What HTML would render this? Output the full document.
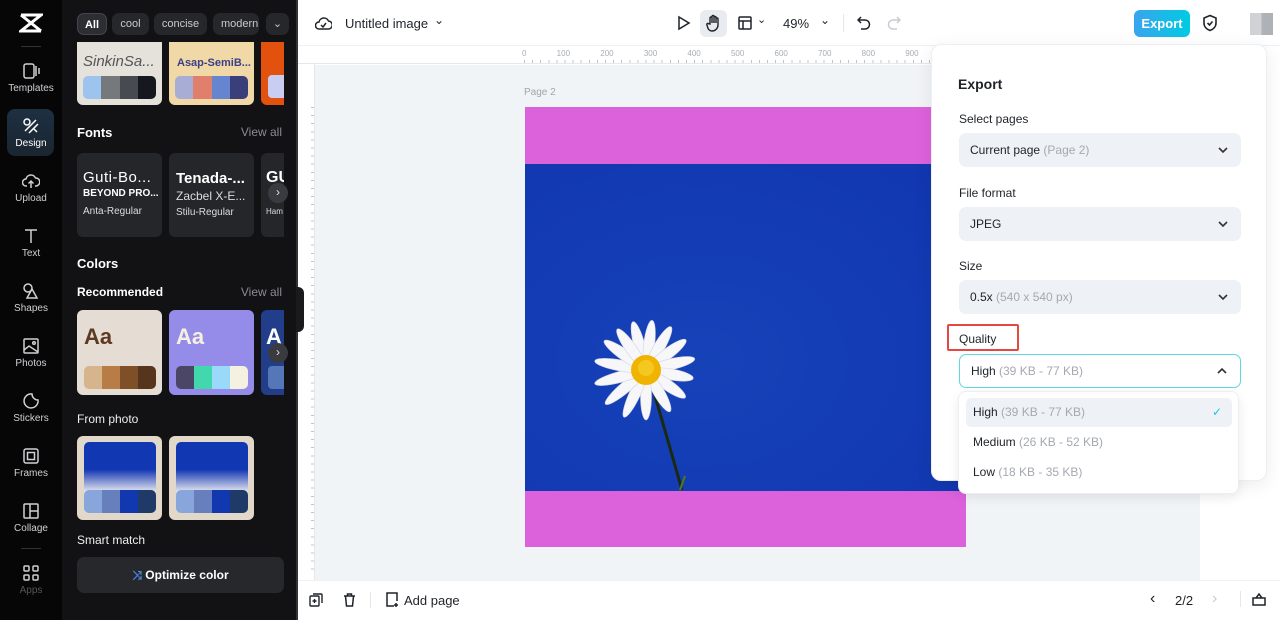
<!DOCTYPE html>
<html><head><meta charset="utf-8"><style>
*{box-sizing:border-box;margin:0;padding:0}
body{width:1280px;height:620px;overflow:hidden;position:relative;font-family:"Liberation Sans",sans-serif;background:#fff}
.a{position:absolute}
.rail{left:0;top:0;width:62px;height:620px;background:#060607}
.ri{position:absolute;left:0;width:62px;text-align:center;color:#cfd0d4;font-size:10px}
.ri svg{display:block;margin:0 auto 3px}
.panel{left:62px;top:0;width:236px;height:620px;background:#121214;border-right:2px solid #333}
.chip{position:absolute;top:13px;height:22px;border-radius:7px;background:#26272b;color:#c9cace;font-size:11px;line-height:22px;text-align:center}
.h{position:absolute;color:#fff;font-weight:bold;font-size:13px}
.va{position:absolute;color:#8a8b90;font-size:12px;right:14px}
.card{position:absolute;border-radius:6px;overflow:hidden}
.sw{position:absolute;display:flex;border-radius:5px;overflow:hidden;height:23px}
.sw i{flex:1}
.lbl{color:#1f2329;font-size:12px;position:absolute;left:27px}
.sel{position:absolute;left:27px;width:282px;height:34px;border-radius:7px;background:#eef1f5;font-size:12px;color:#1f2329;line-height:34px;padding-left:11px}
.sel span{color:#a5a9b0}
.chev{position:absolute;right:12px;top:12px}
.opt{position:absolute;left:7px;width:266px;height:29px;border-radius:5px;font-size:12px;color:#1f2329;line-height:29px;padding-left:7px}
.opt span{color:#a5a9b0}
</style></head><body>

<div class="a rail">
 <svg class="a" style="left:19px;top:13px" width="24" height="20" viewBox="0 0 24 20"><path d="M2 2h20l-20 16h20M2 2l20 16" stroke="#fff" stroke-width="3" fill="none"/></svg>
 <div class="a" style="left:21px;top:46px;width:20px;height:1px;background:#333"></div>
 <div class="ri" style="top:62px"><svg width="18" height="18" viewBox="0 0 18 18" fill="none" stroke="#cfd0d4" stroke-width="1.5"><rect x="2" y="2" width="10" height="14" rx="2"/><path d="M14 4v10M17 6v6"/></svg>Templates</div>
 <div class="a" style="left:7px;top:109px;width:47px;height:47px;border-radius:8px;background:linear-gradient(#1d3042,#1a2530)"></div>
 <div class="ri" style="top:117px;color:#fff"><svg width="18" height="18" viewBox="0 0 18 18" fill="none" stroke="#fff" stroke-width="1.5"><circle cx="5" cy="5" r="3"/><path d="M3 14L14 3M7 16l9-9M12 12l3 3"/></svg>Design</div>
 <div class="ri" style="top:172px"><svg width="18" height="18" viewBox="0 0 18 18" fill="none" stroke="#cfd0d4" stroke-width="1.5"><path d="M5 14H4a3.5 3.5 0 010-7 5 5 0 019.5-1A3.5 3.5 0 0114 14h-1M9 16V9M6.5 11.5L9 9l2.5 2.5"/></svg>Upload</div>
 <div class="ri" style="top:227px"><svg width="18" height="18" viewBox="0 0 18 18" fill="none" stroke="#cfd0d4" stroke-width="1.5"><path d="M3 3h12M9 3v13"/></svg>Text</div>
 <div class="ri" style="top:282px"><svg width="18" height="18" viewBox="0 0 18 18" fill="none" stroke="#cfd0d4" stroke-width="1.5"><circle cx="6" cy="6" r="4"/><path d="M10 7l5 9H5z"/></svg>Shapes</div>
 <div class="ri" style="top:337px"><svg width="18" height="18" viewBox="0 0 18 18" fill="none" stroke="#cfd0d4" stroke-width="1.5"><rect x="2" y="2" width="14" height="14" rx="1"/><path d="M2 13l5-4 9 6"/><circle cx="12" cy="6" r="1.3"/></svg>Photos</div>
 <div class="ri" style="top:392px"><svg width="18" height="18" viewBox="0 0 18 18" fill="none" stroke="#cfd0d4" stroke-width="1.5"><path d="M10 2a7 7 0 106 6 6 6 0 01-6-6z"/></svg>Stickers</div>
 <div class="ri" style="top:447px"><svg width="18" height="18" viewBox="0 0 18 18" fill="none" stroke="#cfd0d4" stroke-width="1.5"><rect x="2" y="2" width="14" height="14" rx="2"/><rect x="5.5" y="5.5" width="7" height="7"/></svg>Frames</div>
 <div class="ri" style="top:502px"><svg width="18" height="18" viewBox="0 0 18 18" fill="none" stroke="#cfd0d4" stroke-width="1.5"><rect x="2" y="2" width="14" height="14" rx="1"/><path d="M8 2v14M8 9h8"/></svg>Collage</div>
 <div class="a" style="left:21px;top:548px;width:20px;height:1px;background:#333"></div>
 <div class="ri" style="top:564px;color:#55565a"><svg width="18" height="18" viewBox="0 0 18 18" fill="none" stroke="#cfd0d4" stroke-width="1.5"><rect x="2" y="2" width="5" height="5" rx="1"/><rect x="11" y="2" width="5" height="5" rx="1"/><rect x="2" y="11" width="5" height="5" rx="1"/><rect x="11" y="11" width="5" height="5" rx="1"/></svg>Apps</div>
</div>

<div class="a panel">
 <div class="chip" style="left:15px;width:30px;background:#2d2e33;border:1px solid #45464b;color:#fff;font-weight:bold">All</div>
 <div class="chip" style="left:50px;width:37px">cool</div>
 <div class="chip" style="left:92px;width:53px">concise</div>
 <div class="chip" style="left:151px;width:46px;overflow:hidden;text-align:left;padding-left:8px">modern</div>
 <div class="chip" style="left:204px;width:23px">⌄</div>
 <div class="card" style="left:15px;top:42px;width:85px;height:63px;background:#e5e1db;border-radius:0 0 6px 6px">
  <div style="position:absolute;left:6px;top:11px;font-style:italic;font-size:15px;color:#555">SinkinSa...</div>
  <div class="sw" style="left:6px;top:34px;width:73px"><i style="background:#9cc4ef"></i><i style="background:#76797c"></i><i style="background:#474a50"></i><i style="background:#15181c"></i></div></div>
 <div class="card" style="left:107px;top:42px;width:85px;height:63px;background:#f0d9a6;border-radius:0 0 6px 6px">
  <div style="position:absolute;left:8px;top:15px;font-weight:bold;font-size:11px;color:#3a3f86">Asap-SemiB...</div>
  <div class="sw" style="left:6px;top:34px;width:73px"><i style="background:#a8add6"></i><i style="background:#df7f6c"></i><i style="background:#6585d0"></i><i style="background:#3a3f7b"></i></div></div>
 <div class="card" style="left:199px;top:42px;width:23px;height:63px;background:#e2520e;border-radius:0 0 0 6px">
  <div style="position:absolute;left:7px;top:33px;width:20px;height:23px;background:#c9cdf2;border-radius:4px"></div></div>
 <div class="h" style="left:15px;top:125px">Fonts</div><div class="va" style="top:125px">View all</div>
 <div class="card" style="left:15px;top:153px;width:85px;height:84px;background:#25262a">
  <div style="position:absolute;left:6px;top:16px;color:#fff;font-size:15px;white-space:nowrap;letter-spacing:.5px">Guti-Bo...</div>
  <div style="position:absolute;left:6px;top:35px;color:#fff;font-size:10px;font-weight:bold;white-space:nowrap">BEYOND PRO...</div>
  <div style="position:absolute;left:6px;top:53px;color:#ddd;font-size:10px">Anta-Regular</div></div>
 <div class="card" style="left:107px;top:153px;width:85px;height:84px;background:#25262a">
  <div style="position:absolute;left:7px;top:17px;color:#fff;font-weight:bold;font-size:15px">Tenada-...</div>
  <div style="position:absolute;left:7px;top:36px;color:#ddd;font-size:12px">Zacbel X-E...</div>
  <div style="position:absolute;left:7px;top:54px;color:#ddd;font-size:10px">Stilu-Regular</div></div>
 <div class="card" style="left:199px;top:153px;width:23px;height:84px;background:#25262a;border-radius:6px 0 0 6px">
  <div style="position:absolute;left:5px;top:16px;color:#fff;font-weight:bold;font-size:16px">GU</div>
  <div style="position:absolute;left:5px;top:54px;color:#ddd;font-size:8px">Ham</div></div>
 <div class="a" style="left:206px;top:183px;width:20px;height:20px;border-radius:50%;background:#3a3b40;color:#ddd;font-size:12px;text-align:center;line-height:19px">›</div>
 <div class="h" style="left:15px;top:256px">Colors</div>
 <div class="h" style="left:15px;top:285px;font-size:12px">Recommended</div><div class="va" style="top:285px">View all</div>
 <div class="card" style="left:15px;top:310px;width:85px;height:85px;background:#e5ddd3">
  <div style="position:absolute;left:7px;top:14px;font-weight:bold;font-size:22px;color:#5a3a22">Aa</div>
  <div class="sw" style="left:7px;top:56px;width:72px"><i style="background:#d6b48c"></i><i style="background:#b87c46"></i><i style="background:#7f4f27"></i><i style="background:#55361d"></i></div></div>
 <div class="card" style="left:107px;top:310px;width:85px;height:85px;background:#958cea">
  <div style="position:absolute;left:7px;top:14px;font-weight:bold;font-size:22px;color:#f6f0df">Aa</div>
  <div class="sw" style="left:7px;top:56px;width:72px"><i style="background:#4b4566"></i><i style="background:#43d7ae"></i><i style="background:#9bd9fb"></i><i style="background:#f5f1e0"></i></div></div>
 <div class="card" style="left:199px;top:310px;width:23px;height:85px;background:#223d8a;border-radius:6px 0 0 6px">
  <div style="position:absolute;left:5px;top:14px;font-weight:bold;font-size:22px;color:#fff">A</div>
  <div style="position:absolute;left:7px;top:56px;width:20px;height:23px;background:#5577b8;border-radius:4px"></div></div>
 <div class="a" style="left:206px;top:343px;width:20px;height:20px;border-radius:50%;background:#3a3b40;color:#ddd;font-size:12px;text-align:center;line-height:19px">›</div>
 <div class="h" style="left:15px;top:412px;font-size:12px;font-weight:normal;color:#eee">From photo</div>
 <div class="card" style="left:15px;top:436px;width:85px;height:84px;background:#e2d8ca">
  <div style="position:absolute;left:7px;top:6px;width:72px;height:50px;border-radius:5px 5px 0 0;background:linear-gradient(#1237b3 55%,#e8e8f0)"></div>
  <div class="sw" style="left:7px;top:54px;width:72px"><i style="background:#89a6dc"></i><i style="background:#6780bd"></i><i style="background:#1238b0"></i><i style="background:#1f3a66"></i></div></div>
 <div class="card" style="left:107px;top:436px;width:85px;height:84px;background:#e2d8ca">
  <div style="position:absolute;left:7px;top:6px;width:72px;height:50px;border-radius:5px 5px 0 0;background:linear-gradient(#1237b3 55%,#e8e8f0)"></div>
  <div class="sw" style="left:7px;top:54px;width:72px"><i style="background:#89a6dc"></i><i style="background:#6780bd"></i><i style="background:#1238b0"></i><i style="background:#1f3a66"></i></div></div>
 <div class="h" style="left:15px;top:533px;font-size:12px;font-weight:normal;color:#eee">Smart match</div>
 <div class="a" style="left:15px;top:557px;width:207px;height:36px;border-radius:7px;background:#27282c;color:#fff;font-weight:bold;font-size:12px;text-align:center;line-height:36px"><span style="color:#4a8cf0">⤨</span> Optimize color</div>
</div>

<div class="a" style="left:298px;top:0;width:982px;height:46px;background:#fff;border-bottom:1px solid #eef0f2"></div>
<svg class="a" style="left:315px;top:15px" width="17" height="16" viewBox="0 0 17 16" fill="none" stroke="#1f2329" stroke-width="1.5"><path d="M4 14a3.5 3.5 0 010-7 5 5 0 019.5-1A3.5 3.5 0 0113 14z"/><path d="M6 10l2 2 3-4"/></svg>
<div class="a" style="left:345px;top:16px;font-size:13px;color:#1f2329">Untitled image</div>
<div class="a" style="left:434px;top:13px;font-size:12px;color:#1f2329">⌄</div>
<svg class="a" style="left:677px;top:15px" width="14" height="16" viewBox="0 0 14 16" fill="none" stroke="#1f2329" stroke-width="1.5"><path d="M2 2l10 6-10 6z"/></svg>
<div class="a" style="left:700px;top:10px;width:27px;height:27px;border-radius:6px;background:#e8ecf0"></div>
<svg class="a" style="left:705px;top:14px" width="17" height="18" viewBox="0 0 17 18" fill="none" stroke="#1f2329" stroke-width="1.4"><path d="M5 10V4a1 1 0 012 0v5V2.5a1 1 0 012 0V9V3.5a1 1 0 012 0V9V5a1 1 0 012 0v6a6 6 0 01-6 6c-2 0-3-1-4-2.5L2 11a1 1 0 011.5-1.3z"/></svg>
<svg class="a" style="left:738px;top:16px" width="14" height="14" viewBox="0 0 14 14" fill="none" stroke="#1f2329" stroke-width="1.5"><rect x="1" y="1" width="12" height="12" rx="1"/><path d="M1 5h12M5 5v8"/></svg>
<div class="a" style="left:757px;top:13px;font-size:11px;color:#1f2329">⌄</div>
<div class="a" style="left:783px;top:16px;font-size:13px;color:#1f2329">49%</div>
<div class="a" style="left:820px;top:13px;font-size:12px;color:#1f2329">⌄</div>
<div class="a" style="left:843px;top:14px;width:1px;height:18px;background:#e5e7ea"></div>
<svg class="a" style="left:857px;top:16px" width="14" height="14" viewBox="0 0 14 14" fill="none" stroke="#1f2329" stroke-width="1.5"><path d="M4 1L1 4l3 3M1 4h7a4.5 4.5 0 010 9H4"/></svg>
<svg class="a" style="left:887px;top:16px" width="14" height="14" viewBox="0 0 14 14" fill="none" stroke="#c8ccd2" stroke-width="1.5"><path d="M10 1l3 3-3 3M13 4H6a4.5 4.5 0 000 9h4"/></svg>
<div class="a" style="left:1134px;top:10px;width:56px;height:27px;border-radius:6px;background:linear-gradient(90deg,#3aa4ee,#00cbe3);color:#fff;font-weight:bold;font-size:13px;text-align:center;line-height:27px">Export</div>
<svg class="a" style="left:1202px;top:14px" width="16" height="18" viewBox="0 0 16 18" fill="none" stroke="#1f2329" stroke-width="1.6"><path d="M8 1.5l6 2.5v5c0 4-3 6.5-6 7.5-3-1-6-3.5-6-7.5V4z"/><path d="M5.5 9l2 2 3-3.5"/></svg>
<div class="a" style="left:1250px;top:13px;width:23px;height:22px;background:linear-gradient(90deg,#d0d3d6 50%,#aeb2b7 50%)"></div>

<div class="a" style="left:298px;top:46px;width:902px;height:18px;background:#fff;border-bottom:1px solid #e4e7eb"></div>
<div class="a" style="left:298px;top:64px;width:17px;height:516px;background:#fff;border-right:1px solid #e4e7eb"></div>
<div class="a" style="left:315px;top:65px;width:885px;height:515px;background:#f1f4f7"></div>
<div class="a" style="left:1200px;top:46px;width:80px;height:534px;background:#fff"></div>
<div class="a" style="left:522px;top:49px;font-size:8px;color:#a8adb4;word-spacing:28px;white-space:nowrap">0 100 200 300 400 500 600 700 800 900 1000</div>
<div class="a" style="left:524px;top:60px;width:676px;height:3px;background:repeating-linear-gradient(90deg,#c0c4ca 0 1px,transparent 1px 8.1px)"></div>
<div class="a" style="left:311px;top:107px;width:3px;height:470px;background:repeating-linear-gradient(#c0c4ca 0 1px,transparent 1px 8.1px)"></div>
<div class="a" style="left:524px;top:87px;font-size:10px;color:#a0a5ab">Page 2</div>
<div class="a" style="left:525px;top:107px;width:441px;height:57px;background:#dc62dc"></div>
<div class="a" style="left:525px;top:164px;width:441px;height:327px;background:radial-gradient(ellipse at 40% 60%,#1642b8,#1136b0)"></div>
<div class="a" style="left:525px;top:491px;width:441px;height:56px;background:#dc62dc"></div>
<svg class="a" style="left:570px;top:310px" width="140" height="185" viewBox="0 0 140 185">
 <path d="M78 62 Q95 120 112 180" stroke="#1a2a10" stroke-width="3" fill="none"/>
 <path d="M110 180 l5 -14" stroke="#4a7a20" stroke-width="2"/>
 <g transform="rotate(-15 76 60)" fill="#f7f7fa" stroke="#d0d4e4" stroke-width=".6">
  <ellipse cx="76" cy="34" rx="5.5" ry="24" transform="rotate(0 76 60)"/>
  <ellipse cx="76" cy="34" rx="5.5" ry="24" transform="rotate(22 76 60)"/>
  <ellipse cx="76" cy="34" rx="5.5" ry="24" transform="rotate(45 76 60)"/>
  <ellipse cx="76" cy="34" rx="5.5" ry="24" transform="rotate(68 76 60)"/>
  <ellipse cx="76" cy="34" rx="5.5" ry="24" transform="rotate(92 76 60)"/>
  <ellipse cx="76" cy="34" rx="5.5" ry="22" transform="rotate(115 76 60)"/>
  <ellipse cx="76" cy="34" rx="5.5" ry="22" transform="rotate(140 76 60)"/>
  <ellipse cx="76" cy="34" rx="5.5" ry="22" transform="rotate(165 76 60)"/>
  <ellipse cx="76" cy="34" rx="5.5" ry="24" transform="rotate(195 76 60)"/>
  <ellipse cx="76" cy="34" rx="5.5" ry="26" transform="rotate(220 76 60)"/>
  <ellipse cx="76" cy="34" rx="5.5" ry="27" transform="rotate(245 76 60)"/>
  <ellipse cx="76" cy="34" rx="5.5" ry="27" transform="rotate(270 76 60)"/>
  <ellipse cx="76" cy="34" rx="5.5" ry="26" transform="rotate(295 76 60)"/>
  <ellipse cx="76" cy="34" rx="5.5" ry="25" transform="rotate(320 76 60)"/>
  <ellipse cx="76" cy="34" rx="5.5" ry="24" transform="rotate(340 76 60)"/>
 </g>
 <circle cx="76" cy="60" r="15" fill="#f0b400"/>
 <circle cx="76" cy="58" r="8" fill="#f5c820"/>
</svg>
<div class="a" style="left:296px;top:287px;width:8px;height:45px;background:#1a1a1c;border-radius:0 6px 6px 0"></div>

<div class="a" style="left:298px;top:580px;width:982px;height:40px;background:#fff;border-top:1px solid #eef0f2"></div>
<svg class="a" style="left:309px;top:593px" width="14" height="14" viewBox="0 0 14 14" fill="none" stroke="#1f2329" stroke-width="1.4"><rect x="1" y="3" width="9" height="10" rx="1"/><path d="M4 1h8a1 1 0 011 1v8M5.5 6v4M3.5 8h4"/></svg>
<svg class="a" style="left:343px;top:593px" width="13" height="14" viewBox="0 0 13 14" fill="none" stroke="#1f2329" stroke-width="1.5"><path d="M1 3h11M4.5 3V1h4v2M2.5 3l1 10h6l1-10"/></svg>
<div class="a" style="left:370px;top:592px;width:1px;height:16px;background:#e5e7ea"></div>
<svg class="a" style="left:385px;top:592px" width="15" height="16" viewBox="0 0 15 16" fill="none" stroke="#1f2329" stroke-width="1.5"><path d="M9 14H2V1h10v8M11 11v4M9 13h4"/></svg>
<div class="a" style="left:404px;top:593px;font-size:13px;color:#1f2329">Add page</div>
<div class="a" style="left:1150px;top:590px;font-size:16px;color:#1f2329">‹</div>
<div class="a" style="left:1175px;top:593px;font-size:13px;color:#1f2329">2/2</div>
<div class="a" style="left:1212px;top:590px;font-size:16px;color:#c8ccd2">›</div>
<div class="a" style="left:1240px;top:591px;width:1px;height:16px;background:#e5e7ea"></div>
<svg class="a" style="left:1251px;top:592px" width="16" height="15" viewBox="0 0 16 15" fill="none" stroke="#1f2329" stroke-width="1.5"><path d="M2 6h12v7H2zM5 6l3-4 3 4"/></svg>

<div class="a" style="left:931px;top:44px;width:336px;height:437px;background:#fff;border-radius:10px;border:1px solid #eceef1;box-shadow:0 4px 18px rgba(0,0,0,.08)">
 <div class="a" style="left:26px;top:31px;font-weight:bold;font-size:14px;color:#1f2329">Export</div>
 <div class="lbl" style="top:67px">Select pages</div>
 <div class="sel" style="top:88px">Current page <span>(Page 2)</span><svg class="chev" width="12" height="10" viewBox="0 0 12 10"><path d="M2 3l4 4 4-4" stroke="#333" stroke-width="1.6" fill="none"/></svg></div>
 <div class="lbl" style="top:141px">File format</div>
 <div class="sel" style="top:162px">JPEG<svg class="chev" width="12" height="10" viewBox="0 0 12 10"><path d="M2 3l4 4 4-4" stroke="#333" stroke-width="1.6" fill="none"/></svg></div>
 <div class="lbl" style="top:214px">Size</div>
 <div class="sel" style="top:235px">0.5x <span>(540 x 540 px)</span><svg class="chev" width="12" height="10" viewBox="0 0 12 10"><path d="M2 3l4 4 4-4" stroke="#333" stroke-width="1.6" fill="none"/></svg></div>
 <div class="a" style="left:15px;top:279px;width:72px;height:27px;border:2px solid #e5483f;border-radius:2px"></div>
 <div class="lbl" style="top:287px">Quality</div>
 <div class="sel" style="top:309px;background:#fff;border:1px solid #5fd6e8;line-height:32px">High <span>(39 KB - 77 KB)</span><svg class="chev" width="12" height="10" viewBox="0 0 12 10" style="top:11px"><path d="M2 7l4-4 4 4" stroke="#333" stroke-width="1.6" fill="none"/></svg></div>
</div>
<div class="a" style="left:958px;top:391px;width:281px;height:103px;background:#fff;border-radius:8px;border:1px solid #eceef1;box-shadow:0 4px 12px rgba(0,0,0,.08)">
 <div class="opt" style="top:6px;background:#eef1f5">High <span>(39 KB - 77 KB)</span><span style="position:absolute;right:10px;color:#22c4dc">✓</span></div>
 <div class="opt" style="top:36px">Medium <span>(26 KB - 52 KB)</span></div>
 <div class="opt" style="top:66px">Low <span>(18 KB - 35 KB)</span></div>
</div>
</body></html>
